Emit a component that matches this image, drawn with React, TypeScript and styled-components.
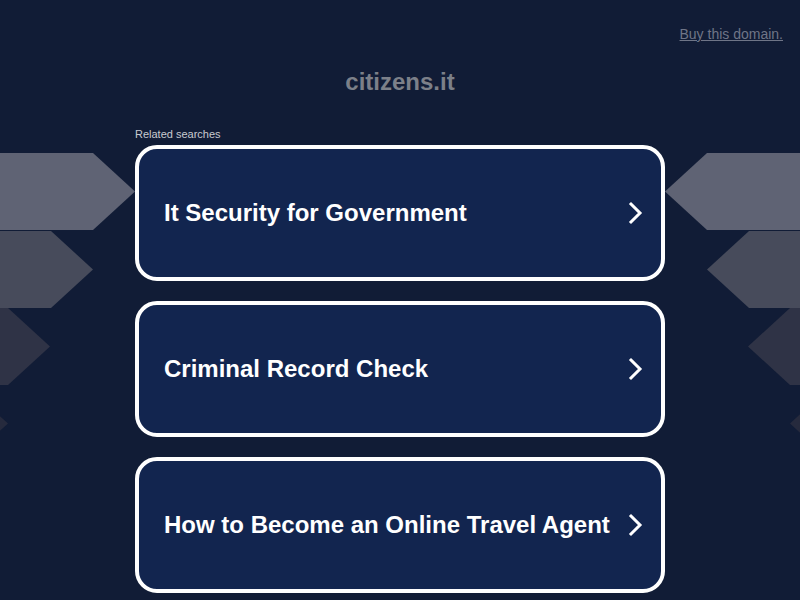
import React from "react";
import styled, { createGlobalStyle } from "styled-components";

const Global = createGlobalStyle`
  html, body { margin: 0; padding: 0; }
  body {
    background: #111c36;
    font-family: Arial, "Liberation Sans", Helvetica, sans-serif;
    width: 800px;
    height: 600px;
    overflow: hidden;
  }
`;

const Page = styled.div`
  position: relative;
  width: 800px;
  height: 600px;
  overflow: hidden;
`;

const Decor = styled.svg`
  position: absolute;
  left: 0;
  top: 0;
  width: 800px;
  height: 600px;
  z-index: 0;
`;

const Content = styled.div`
  position: relative;
  z-index: 1;
  display: flex;
  flex-direction: column;
  align-items: center;
`;

const TopBar = styled.div`
  align-self: stretch;
  display: flex;
  justify-content: flex-end;
  padding: 26px 17px 0 0;
  height: 17px;
`;

const BuyLink = styled.a`
  color: #6f7587;
  font-size: 14px;
  text-decoration: underline;
  line-height: 17px;
`;

const Domain = styled.h1`
  margin: 0;
  margin-top: 25px;
  color: #7c8089;
  font-size: 24px;
  font-weight: bold;
  line-height: 28px;
`;

const Section = styled.div`
  margin-top: 32px;
  width: 530px;
  display: flex;
  flex-direction: column;
`;

const Label = styled.div`
  color: #c8cad0;
  font-size: 11px;
  line-height: 13px;
  margin-bottom: 4px;
`;

const List = styled.div`
  display: flex;
  flex-direction: column;
  gap: 20px;
`;

const Card = styled.a`
  box-sizing: border-box;
  height: 136px;
  border: 4px solid #ffffff;
  border-radius: 22px;
  background: #12254f;
  display: flex;
  align-items: center;
  justify-content: space-between;
  padding: 0 17px 0 25px;
  text-decoration: none;
`;

const CardText = styled.span`
  color: #ffffff;
  font-size: 24px;
  font-weight: bold;
`;

const Chevron = () => (
  <svg width="16" height="24" viewBox="0 0 16 24">
    <polyline
      points="3,3 12,12 3,21"
      fill="none"
      stroke="#ffffff"
      strokeWidth="3"
      strokeLinecap="square"
    />
  </svg>
);

const leftArrows = [
  { y: 153, x: 93, color: "#5f6374" },
  { y: 231, x: 51, color: "#474b5b" },
  { y: 308, x: 8, color: "#2f3346" },
  { y: 385, x: -34, color: "#262a3d" },
];

const rightArrows = [
  { y: 153, x: 707, color: "#5f6374" },
  { y: 231, x: 749, color: "#474b5b" },
  { y: 308, x: 790, color: "#2f3346" },
  { y: 385, x: 832, color: "#262a3d" },
];

const items = [
  "It Security for Government",
  "Criminal Record Check",
  "How to Become an Online Travel Agent",
];

export default function App() {
  return (
    <Page>
      <Global />
      <Decor viewBox="0 0 800 600">
        {leftArrows.map((a, i) => (
          <polygon
            key={"l" + i}
            fill={a.color}
            points={`0,${a.y} ${a.x},${a.y} ${a.x + 42},${a.y + 38.5} ${a.x},${a.y + 77} 0,${a.y + 77}`}
          />
        ))}
        {rightArrows.map((a, i) => (
          <polygon
            key={"r" + i}
            fill={a.color}
            points={`800,${a.y} ${a.x},${a.y} ${a.x - 42},${a.y + 38.5} ${a.x},${a.y + 77} 800,${a.y + 77}`}
          />
        ))}
      </Decor>
      <Content>
        <TopBar>
          <BuyLink href="#">Buy this domain.</BuyLink>
        </TopBar>
        <Domain>citizens.it</Domain>
        <Section>
          <Label>Related searches</Label>
          <List>
            {items.map((t) => (
              <Card key={t} href="#">
                <CardText>{t}</CardText>
                <Chevron />
              </Card>
            ))}
          </List>
        </Section>
      </Content>
    </Page>
  );
}
